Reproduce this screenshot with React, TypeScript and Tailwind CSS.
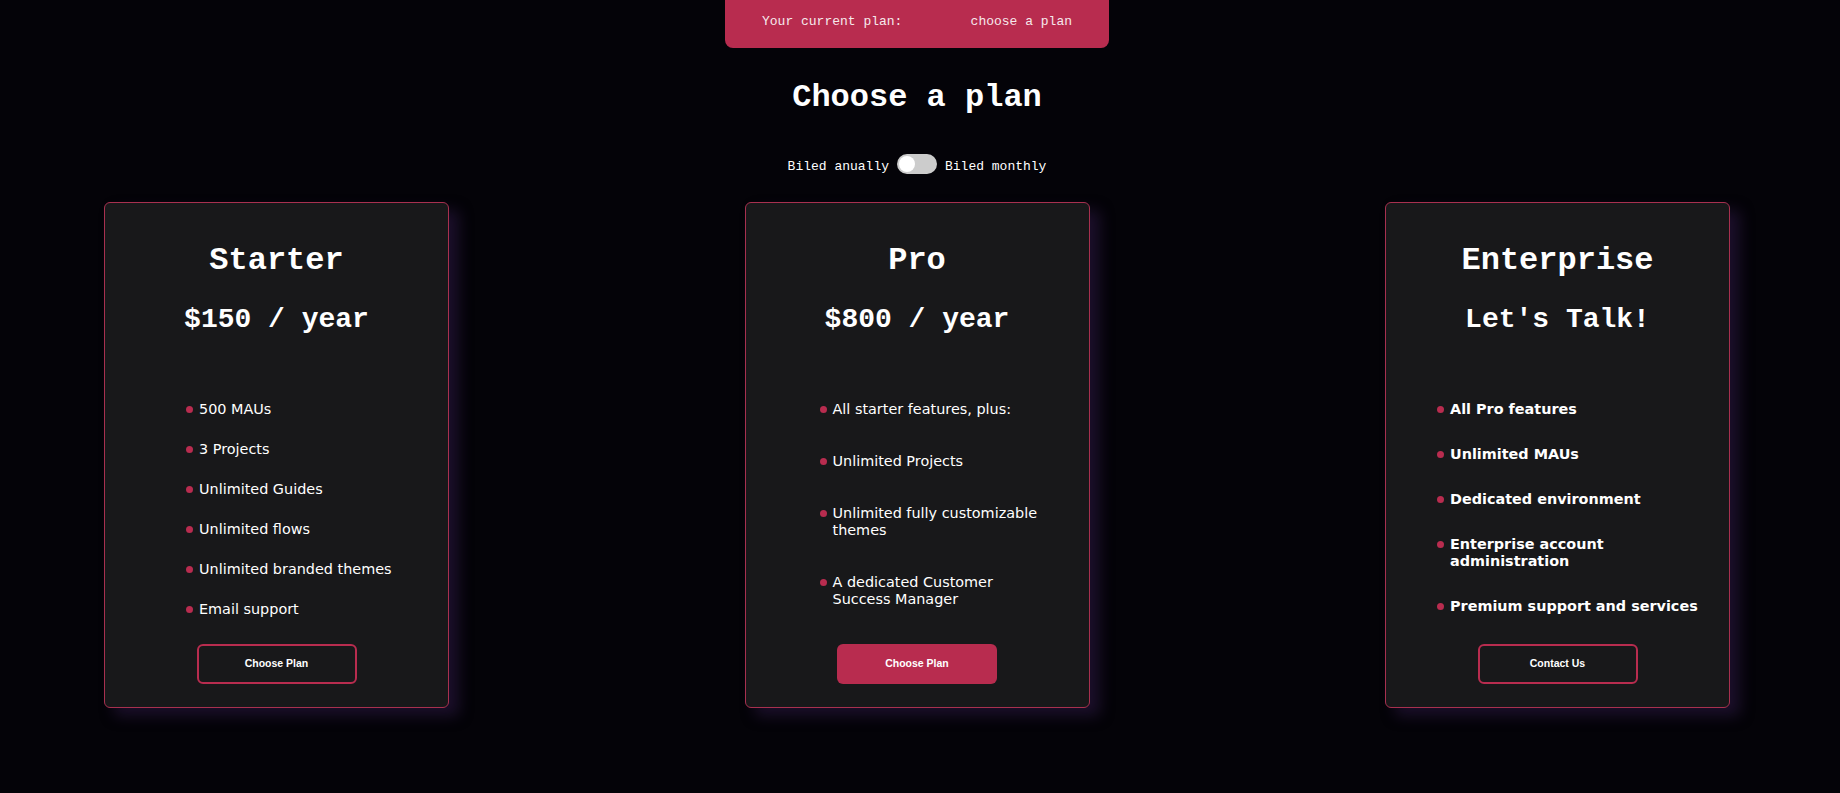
import React, { FC } from "react";

type Plan = {
  name: string;
  price: string;
  features: string[];
  button: string;
  filled?: boolean;
  bold?: boolean;
  listClass: string;
};

const plans: Plan[] = [
  {
    name: "Starter",
    price: "$150 / year",
    features: [
      "500 MAUs",
      "3 Projects",
      "Unlimited Guides",
      "Unlimited flows",
      "Unlimited branded themes",
      "Email support",
    ],
    button: "Choose Plan",
    listClass: "ml-[81px] w-[240px] gap-[23px]",
  },
  {
    name: "Pro",
    price: "$800 / year",
    features: [
      "All starter features, plus:",
      "Unlimited Projects",
      "Unlimited fully customizable themes",
      "A dedicated Customer Success Manager",
    ],
    button: "Choose Plan",
    filled: true,
    listClass: "ml-[74px] w-[225px] gap-[35px]",
  },
  {
    name: "Enterprise",
    price: "Let's Talk!",
    features: [
      "All Pro features",
      "Unlimited MAUs",
      "Dedicated environment",
      "Enterprise account administration",
      "Premium support and services",
    ],
    button: "Contact Us",
    bold: true,
    listClass: "ml-[51px] w-[265px] gap-[28px]",
  },
];

const mono = "font-['Liberation_Mono',monospace]";

const Card: FC<{ plan: Plan }> = ({ plan }) => (
  <div className="w-[345px] h-[506px] flex flex-col rounded-md border border-[#a8304f] bg-[#18181a] pt-[40px] pb-[23px] shadow-[10px_8px_14px_rgba(45,25,70,0.55)]">
    <h2 className={`${mono} text-center text-[32px] leading-[36px] font-bold text-white`}>
      {plan.name}
    </h2>
    <div className={`${mono} mt-[25px] text-center text-[28px] leading-[32px] font-bold text-white`}>
      {plan.price}
    </div>
    <ul
      className={`mt-[65px] flex flex-col font-['DejaVu_Sans',sans-serif] text-[14.4px] leading-[17px] text-white ${
        plan.bold ? "font-bold" : ""
      } ${plan.listClass}`}
    >
      {plan.features.map((f, i) => (
        <li key={i} className="flex items-start gap-[6px]">
          <span className="mt-[5px] h-[7px] w-[7px] shrink-0 rounded-full bg-[#b82c4f]" />
          <span>{f}</span>
        </li>
      ))}
    </ul>
    <button
      className={`mt-auto mx-auto w-[160px] h-[40px] rounded-md font-['Liberation_Sans',Arial,sans-serif] text-[10.5px] font-bold text-white ${
        plan.filled ? "bg-[#b82c4f]" : "border-2 border-[#b82c4f] bg-transparent"
      }`}
    >
      {plan.button}
    </button>
  </div>
);

const App: FC = () => {
  return (
    <div className="min-h-[793px] w-full bg-[#040308]">
      <div className="w-[1834px] flex flex-col items-center">
        <div
          className={`${mono} w-[384px] h-[48px] flex items-center justify-between px-[37px] pb-[5px] rounded-b-lg bg-[#b82c4f] text-[13px] text-[#f6e9ec]`}
        >
          <span>Your current plan:</span>
          <span>choose a plan</span>
        </div>
        <h1 className={`${mono} mt-[32px] text-[32px] leading-[36px] font-bold text-white`}>
          Choose a plan
        </h1>
        <div className={`${mono} mt-[38px] h-[20px] flex items-center gap-[8px] text-[13px] leading-[14px] text-white`}>
          <span className="pt-[5px]">Biled anually</span>
          <span className="relative inline-block h-[20px] w-[40px] rounded-full bg-[#cccccc]">
            <span className="absolute left-[2px] top-[2px] h-[16px] w-[16px] rounded-full bg-white" />
          </span>
          <span className="pt-[5px]">Biled monthly</span>
        </div>
        <div className="mt-[28px] w-full flex justify-between px-[104px]">
          {plans.map((p) => (
            <Card key={p.name} plan={p} />
          ))}
        </div>
      </div>
    </div>
  );
};

export default App;
